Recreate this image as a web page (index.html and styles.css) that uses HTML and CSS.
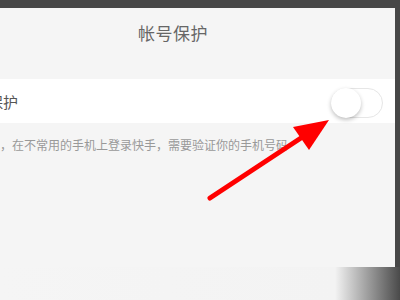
FILE: index.html
```html
<!DOCTYPE html>
<html lang="zh-CN">
<head>
<meta charset="UTF-8">
<meta name="viewport" content="width=device-width, initial-scale=1.0">
<title>帐号保护</title>
<link rel="stylesheet" href="styles.css">
</head>
<body>
    <div class="frame">
        <div class="screen">
            <div class="title">帐号保护</div>
            <div class="row">
                <span class="label">帐号保护</span>
                <div class="switch">
                    <div class="knob"></div>
                </div>
            </div>
            <div class="tip">，在不常用的手机上登录快手，需要验证你的手机号码</div>
            <!-- 红色箭头指向开关 -->
            <svg class="arrow" width="400" height="300" viewBox="0 0 400 300">
                <line x1="210" y1="198" x2="304" y2="136" stroke="#ff0000" stroke-width="5" stroke-linecap="round"/>
                <polygon points="329,120 293,127 309,150" fill="#ff0000"/>
            </svg>
        </div>
        <div class="bottom"></div>
    </div>
</body>
</html>
```
FILE: styles.css
```css
/* 基本样式 */
body {
    margin: 0;
    padding: 0;
    background-color: #474747;
    font-family: "Noto Sans CJK SC", "Liberation Sans", sans-serif;
    overflow: hidden;
}
.frame {
    width: 400px;
    height: 300px;
    padding-top: 8px;
    box-sizing: border-box;
    display: flex;
    flex-direction: column;
}
/* 手机界面区域 */
.screen {
    width: 395px;
    height: 259px;
    background-color: #f5f5f5;
    position: relative;
    display: flex;
    flex-direction: column;
}
/* 标题 */
.title {
    height: 71px;
    font-size: 17px;
    line-height: 50px;
    color: #666;
    padding-left: 138px;
    white-space: nowrap;
    letter-spacing: 0.5px;
}
/* 开关所在行 */
.row {
    height: 44px;
    background-color: #fff;
    display: flex;
    align-items: center;
    justify-content: space-between;
    padding-right: 12px;
}
.label {
    margin-left: -42px;
    font-size: 15px;
    color: #555;
}
/* 开关 */
.switch {
    width: 52px;
    height: 30px;
    border-radius: 16px;
    border: 1px solid #e6e6e6;
    background-color: #fff;
    box-sizing: border-box;
    display: flex;
    align-items: center;
    margin-top: 4px;
}
.knob {
    width: 30px;
    height: 30px;
    border-radius: 50%;
    background-color: #fff;
    margin-left: -1px;
    box-shadow: 0 2px 4px rgba(0, 0, 0, 0.25);
}
/* 提示文字 */
.tip {
    font-size: 12px;
    color: #999;
    padding-top: 13px;
    white-space: nowrap;
}
/* 箭头覆盖层 */
.arrow {
    position: absolute;
    left: 0;
    top: -8px;
}
/* 底部渐变 */
.bottom {
    flex: 1;
    background: linear-gradient(to right, #f5f5f5 0, #f3f3f3 335px, #4a4a4a 400px);
}
```
